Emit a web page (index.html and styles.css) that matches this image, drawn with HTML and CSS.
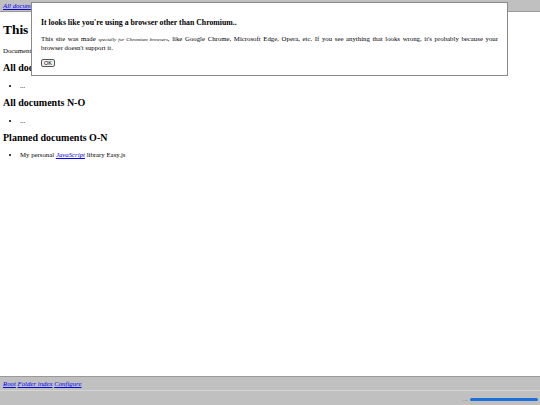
FILE: index.html
```html
<!DOCTYPE html>
<html lang="en">
<head>
    <meta charset="UTF-8">
    <meta name="viewport" content="width=device-width, initial-scale=1.0">
    <title>Documents</title>
    <link rel="stylesheet" href="styles.css">
</head>
<body>
    <div class="page">
        <nav class="top-bar">
            <a href="#" class="nav-link">All documents</a>
        </nav>

        <main class="content">
            <h1>This site is still being built</h1>
            <p>Documents are listed below, grouped by name.</p>

            <h2>All documents A-M</h2>
            <ul>
                <li>...</li>
            </ul>

            <h2>All documents N-O</h2>
            <ul>
                <li>...</li>
            </ul>

            <h2>Planned documents O-N</h2>
            <ul>
                <li>My personal <a href="#"><i>JavaScript</i></a> library Easy.js</li>
            </ul>
        </main>

        <footer class="status-bar">
            <div class="footer-links">
                <a href="#" class="nav-link">Root</a>
                <a href="#" class="nav-link">Folder index</a>
                <a href="#" class="nav-link">Configure</a>
            </div>
            <div class="footer-status">
                <span class="status-text">...</span>
                <div class="progress"><div class="progress-fill" style="width: 100%;"></div></div>
            </div>
        </footer>
    </div>

    <!-- Browser warning -->
    <div class="browser-dialog">
        <h3>It looks like you're using a browser other than Chromium..</h3>
        <p>This site was made <em class="special">specially for Chromium browsers</em>, like Google Chrome, Microsoft Edge, Opera, etc. If you see anything that looks wrong, it's probably because your browser doesn't support it.</p>
        <button class="ok-button">OK</button>
    </div>
</body>
</html>
```

FILE: styles.css
```css
/* Basic Reset */
* {
    box-sizing: border-box;
}

body {
    font-family: 'Liberation Serif', 'Times New Roman', serif;
    font-size: 6.8px;
    color: #000;
    background-color: #ffffff;
    margin: 0;
    padding: 0;
}

a {
    color: #0000ee;
}

.page {
    display: flex;
    flex-direction: column;
    height: 100vh;
}

.top-bar {
    height: 12px;
    padding: 1px 3px 0;
    background-color: #c0c0c0;
    border-bottom: 1px solid #9a9a9a;
    line-height: 9px;
}

.nav-link {
    font-style: italic;
}

.content {
    flex: 1;
    overflow: hidden;
    padding: 0 3px;
}

.content h1 {
    font-size: 13.4px;
    margin: 10px 0 9px;
}

.content h2 {
    font-size: 10px;
    margin: 8.4px 0;
}

.content p {
    margin: 6.8px 0;
}

.content ul {
    margin: 6.8px 0;
    padding-left: 17px;
}

.status-bar {
    background-color: #c0c0c0;
    border-top: 1px solid #9a9a9a;
}

.footer-links {
    height: 14px;
    padding: 2px 3px 0;
    line-height: 9px;
    border-bottom: 1px solid #d6d6d6;
}

.footer-status {
    height: 14px;
    display: flex;
    align-items: center;
    justify-content: flex-end;
    gap: 2px;
    padding: 0 2px 0 0;
}

.status-text {
    font-family: 'Liberation Sans', Arial, sans-serif;
    font-size: 6px;
    color: #6a6a6a;
    margin-top: 1px;
}

.progress {
    width: 68px;
    height: 3px;
    margin-top: 2px;
    background-color: #e0e0e0;
    border-radius: 2px;
    overflow: hidden;
}

.progress-fill {
    height: 100%;
    background-color: #1a6fdc;
}

.browser-dialog {
    position: absolute;
    left: 31px;
    top: 2px;
    width: 477px;
    height: 74px;
    padding: 7px 9px;
    background-color: #ffffff;
    border: 1px solid #8a8a8a;
}

.browser-dialog h3 {
    font-size: 7.8px;
    margin: 7.8px 0;
}

.browser-dialog p {
    margin: 8px 0 7px;
    line-height: 8px;
    text-align: justify;
}

.special {
    font-size: 5px;
}

.ok-button {
    display: block;
    font-family: 'Liberation Sans', Arial, sans-serif;
    font-size: 5.5px;
    padding: 0 2px;
    height: 8px;
    line-height: 6px;
    background-color: #efefef;
    border: 1px solid #555;
    border-radius: 2px;
    color: #000;
}
```
